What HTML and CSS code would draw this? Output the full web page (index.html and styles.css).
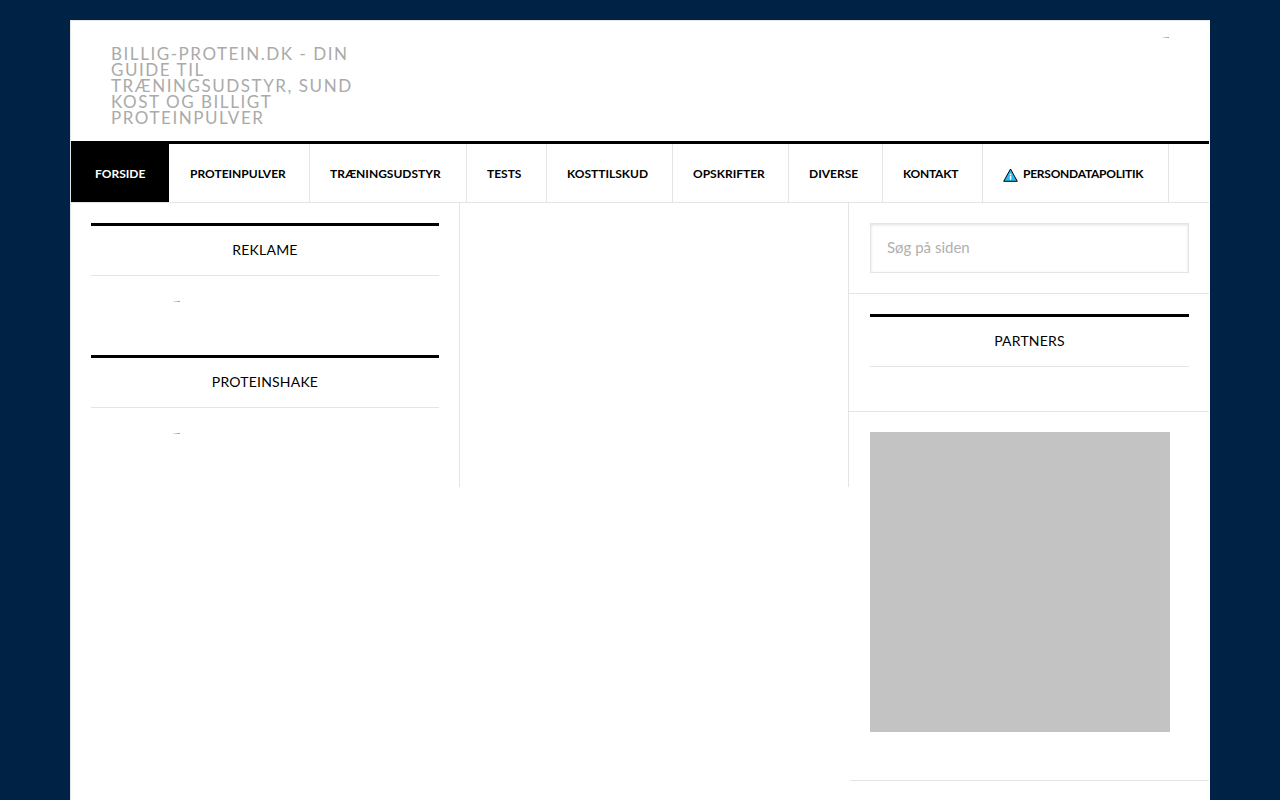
FILE: index.html
```html
<!DOCTYPE html>
<html lang="da">
<head>
<meta charset="utf-8">
<title>Billig-protein.dk</title>
<link rel="stylesheet" href="styles.css">
</head>
<body>
<div class="site">
  <header class="site-header">
    <h1 class="site-title">BILLIG-PROTEIN.DK - DIN GUIDE TIL TRÆNINGSUDSTYR, SUND KOST OG BILLIGT PROTEINPULVER</h1>
    <div class="header-ad"><span class="ad-mark"></span></div>
  </header>
  <nav class="main-nav">
    <a class="nav-item nav-active" href="#">FORSIDE</a>
    <a class="nav-item" href="#">PROTEINPULVER</a>
    <a class="nav-item" href="#">TRÆNINGSUDSTYR</a>
    <a class="nav-item" href="#">TESTS</a>
    <a class="nav-item" href="#">KOSTTILSKUD</a>
    <a class="nav-item" href="#">OPSKRIFTER</a>
    <a class="nav-item" href="#">DIVERSE</a>
    <a class="nav-item nav-tight" href="#">KONTAKT</a>
    <a class="nav-item nav-tight" href="#">
      <svg class="info-icon" width="15" height="14" viewBox="0 0 15 14" aria-hidden="true">
        <path d="M7.5 1 L14.3 13.3 H.7 Z" fill="#22bdf5" stroke="#000" stroke-width="1" stroke-linejoin="round"/>
        <rect x="6.8" y="5.8" width="1.5" height="1.5" fill="#fff"/>
        <rect x="6.8" y="8" width="1.5" height="3.8" fill="#fff"/>
      </svg>PERSONDATAPOLITIK</a>
  </nav>
  <div class="columns">
    <aside class="col-left">
      <section class="widget">
        <h2 class="widget-title">REKLAME</h2>
        <div class="ad-slot"><span class="ad-mark"></span></div>
      </section>
      <section class="widget">
        <h2 class="widget-title">PROTEINSHAKE</h2>
        <div class="ad-slot"><span class="ad-mark"></span></div>
      </section>
    </aside>
    <main class="col-middle"></main>
    <aside class="col-right">
      <section class="right-block search-block">
        <input class="search-input" type="text" placeholder="Søg på siden">
      </section>
      <section class="right-block partners-block">
        <h2 class="widget-title">PARTNERS</h2>
      </section>
      <section class="right-block banner-block">
        <div class="banner"></div>
      </section>
    </aside>
  </div>
</div>
</body>
</html>
```
FILE: styles.css
```css
* { box-sizing: border-box; }
html, body { margin: 0; height: 100%; }
body {
  background: #002244;
  font-family: Lato, "Liberation Sans", sans-serif;
  overflow: hidden;
}
.site {
  width: 1140px;
  height: 780px;
  margin: 20px 0 0 70px;
  background: #fff;
  border: 1px solid #e4e4e4;
  border-bottom: 0;
  border-right-color: #fff;
}
.site-header {
  display: flex;
  justify-content: space-between;
  height: 120px;
  padding: 25px 40px 0;
}
.site-title {
  width: 260px;
  margin: 0;
  font-size: 17px;
  font-weight: 400;
  line-height: 16px;
  letter-spacing: 1.55px;
  color: #aaa;
}
.header-ad { width: 7px; margin-top: -9px; }
.ad-mark {
  display: block;
  width: 7px;
  height: 1px;
  background: linear-gradient(90deg, #fde8dc, #e8803c);
}
.main-nav {
  display: grid;
  grid-template-columns: 99px 140px 157px 80px 126px 116px 94px 100px 186px;
  height: 62px;
  border-top: 3px solid #000;
  border-bottom: 1px solid #e4e4e4;
}
.nav-item {
  display: flex;
  align-items: center;
  padding-left: 20px;
  border-right: 1px solid #e4e4e4;
  font-size: 12px;
  font-weight: 700;
  color: #000;
  text-decoration: none;
}
.nav-tight { letter-spacing: -.25px; }
.nav-active {
  padding-left: 24px;
  background: #000;
  background-clip: padding-box;
  color: #fff;
  border-right: 1px solid #fff;
}
.info-icon { margin-right: 5px; margin-top: 3px; }
.columns { display: flex; height: 597px; }
.col-left, .col-middle {
  width: 389px;
  height: 284px;
  border-right: 1px solid #e4e4e4;
}
.col-left { padding: 20px 20px 0; }
.widget-title {
  height: 53px;
  margin: 0;
  border-top: 3px solid #000;
  border-bottom: 1px solid #e4e4e4;
  font-size: 14px;
  font-weight: 400;
  line-height: 47px;
  letter-spacing: .2px;
  text-align: center;
  color: #000;
}
.widget { height: 132px; }
.ad-slot { padding: 25px 0 0 82px; }
.col-right { flex: 1; }
.right-block {
  padding: 20px 20px 20px 21px;
  border-bottom: 1px solid #e4e4e4;
}
.search-block { height: 91px; }
.search-input {
  display: block;
  width: 100%;
  height: 50px;
  padding: 0 16px 2px;
  background: #fff;
  border: 1px solid #e4e4e4;
  box-shadow: inset 0 1px 3px rgba(0, 0, 0, .12);
  outline: 0;
  font: 400 15px Lato, "Liberation Sans", sans-serif;
  color: #999;
}
.search-input::placeholder { color: #b0b0b0; opacity: 1; }
.partners-block { height: 118px; padding-bottom: 0; }
.banner-block { height: 369px; margin-left: 1px; padding: 20px 0 0 20px; }
.banner { width: 300px; height: 300px; background: #c3c3c3; }
```
